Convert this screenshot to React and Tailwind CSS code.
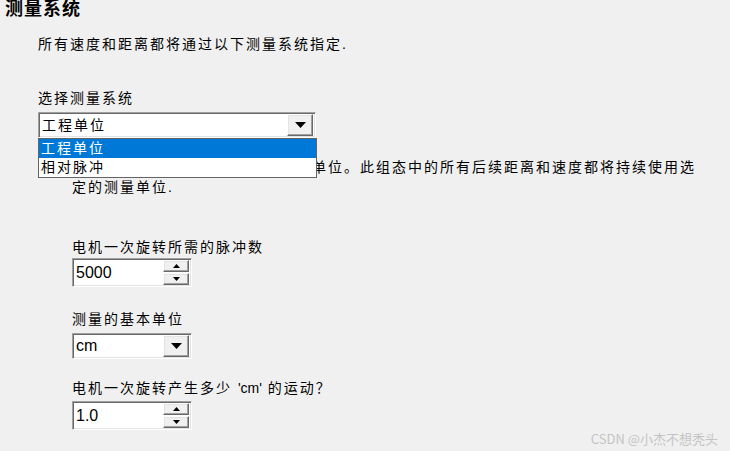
function Arrow({ small = false }) {
  return small ? (
    <svg width="7" height="4" viewBox="0 0 7 4">
      <path d="M0 0H7L3.5 4Z" fill="#000" />
    </svg>
  ) : (
    <svg width="11" height="6" viewBox="0 0 11 6">
      <path d="M0 0H11L5.5 6Z" fill="#000" />
    </svg>
  );
}

function UpArrow() {
  return (
    <svg width="7" height="4" viewBox="0 0 7 4">
      <path d="M0 4H7L3.5 0Z" fill="#000" />
    </svg>
  );
}

const sunken =
  "border border-t-[#a0a0a0] border-l-[#a0a0a0] border-b-white border-r-white shadow-[inset_1px_1px_0_#696969,inset_-1px_-1px_0_#e3e3e3] bg-white";
const raised =
  "border border-t-white border-l-white border-b-[#696969] border-r-[#696969] shadow-[inset_-1px_-1px_0_#a0a0a0,inset_1px_1px_0_#e3e3e3] bg-[#f0f0f0] flex items-center justify-center";

function Combo({ value, width, open, latin }) {
  return (
    <div className="relative" style={{ width }}>
      <div className={`${sunken} h-[26px] flex items-center pl-[3px] pr-[2px]`}>
        <span className={latin ? "flex-1 text-[16px] tracking-normal leading-[20px]" : "flex-1 text-[14px] tracking-[2px] leading-[20px]"}>
          {value}
        </span>
        <div className={`${raised} w-[26px] h-[22px]`}>
          <Arrow />
        </div>
      </div>
      {open && (
        <div className="absolute left-0 top-full w-[279px] border border-[#646464] bg-white text-[14px] tracking-[2px] leading-[19px]">
          <div className="bg-[#0078d7] text-white pl-[2px] h-[19px]">工程单位</div>
          <div className="pl-[2px] h-[19px]">相对脉冲</div>
        </div>
      )}
    </div>
  );
}

function Spin({ value }) {
  return (
    <div className={`${sunken} w-[120px] h-[29px] flex items-center pl-[3px] pr-[2px]`}>
      <span className="flex-1 text-[16px] tracking-normal leading-[20px]">{value}</span>
      <div className="flex flex-col gap-[1px] w-[26px]">
        <div className={`${raised} h-[12px]`}>
          <UpArrow />
        </div>
        <div className={`${raised} h-[12px]`}>
          <Arrow small />
        </div>
      </div>
    </div>
  );
}

export default function App() {
  return (
    <div className="relative w-[730px] h-[451px] overflow-hidden bg-[#f0f0f0] text-black antialiased font-['Liberation_Sans','Noto_Sans_CJK_SC',sans-serif]">
      <h1 className="pl-[5px] text-[18px] font-bold leading-[18px] tracking-[1px]">测量系统</h1>

      <div className="pl-[38px]">
        <p className="mt-[16px] text-[14px] tracking-[2px] leading-[20px]">所有速度和距离都将通过以下测量系统指定.</p>

        <p className="mt-[34px] text-[14px] tracking-[2px] leading-[20px]">选择测量系统</p>
        <div className="mt-[4px] relative z-10">
          <Combo value="工程单位" width={278} open />
        </div>

        <div className="pl-[34px] text-[14px] tracking-[2px] leading-[20px]">
          <p className="mt-[19px]">
            工程单位允许您为应用指定自定义单位。此组态中的所有后续距离和速度都将持续使用选
            <br />
            定的测量单位.
          </p>

          <p className="mt-[40px]">电机一次旋转所需的脉冲数</p>
          <div className="mt-[1px]">
            <Spin value="5000" />
          </div>

          <p className="mt-[22px]">测量的基本单位</p>
          <div className="mt-[4px]">
            <Combo value="cm" width={120} latin />
          </div>

          <p className="mt-[19px]">
            电机一次旋转产生多少 <span className="tracking-normal">'cm'</span> 的运动？
          </p>
          <div className="mt-[3px]">
            <Spin value="1.0" />
          </div>
        </div>
      </div>

      <div className="absolute right-[12px] bottom-[4px] text-[13px] leading-[16px] text-[#c4c4c4] font-['Noto_Sans_CJK_SC',sans-serif]">
        CSDN @小杰不想秃头
      </div>
    </div>
  );
}
